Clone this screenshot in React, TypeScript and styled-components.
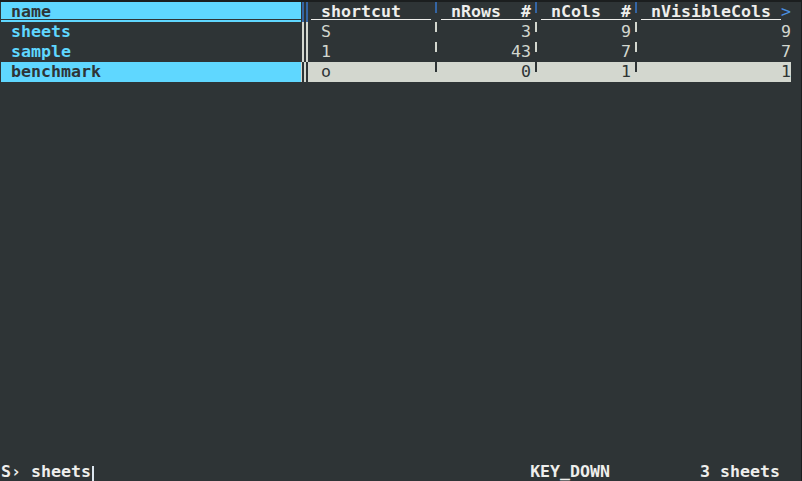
import React from 'react';
import styled, {createGlobalStyle} from 'styled-components';

const colors = {
    bg: '#2e3436',
    edge: '#1b1e1f',
    cyan: '#5fd7ff',
    light: '#d3d7cf',
    white: '#eeeeec',
    dark: '#2e3436',
    blue: '#3465a4',
    arrow: '#4a8fe0',
};

const CELL = 10;

type Column = {
    key: 'shortcut' | 'nRows' | 'nCols' | 'nVisibleCols';
    title: string;
    cells: number;
    numeric: boolean;
    type?: string;
    more?: boolean;
};

const columns: Column[] = [
    {key: 'shortcut', title: 'shortcut', cells: 12, numeric: false},
    {key: 'nRows', title: 'nRows', cells: 9, numeric: true, type: '#'},
    {key: 'nCols', title: 'nCols', cells: 9, numeric: true, type: '#'},
    {key: 'nVisibleCols', title: 'nVisibleCols', cells: 15, numeric: true, more: true},
];

const sheets = [
    {name: 'sheets', shortcut: 'S', nRows: 3, nCols: 9, nVisibleCols: 9},
    {name: 'sample', shortcut: '1', nRows: 43, nCols: 7, nVisibleCols: 7},
    {name: 'benchmark', shortcut: 'o', nRows: 0, nCols: 1, nVisibleCols: 1},
];

const selectedRow = 2;

export default function App() {
    return (
        <>
            <GlobalStyle/>
            <Terminal>
                <Sheet>
                    <Row>
                        <KeyCell $filled $header>
                            <HeaderLabel $color={colors.dark}>name</HeaderLabel>
                        </KeyCell>
                        <KeySep $header/>
                        {columns.map((col, i) => (
                            <React.Fragment key={col.key}>
                                <HeaderCell $cells={col.cells}>
                                    <HeaderLabel $color={colors.white}>
                                        <span>{col.title}</span>
                                        {col.type && <span>{col.type}</span>}
                                    </HeaderLabel>
                                    {col.more && <More>&gt;</More>}
                                </HeaderCell>
                                {i < columns.length - 1 && <ColSep $header/>}
                            </React.Fragment>
                        ))}
                    </Row>

                    {sheets.map((s, r) => {
                        const sel = r === selectedRow;
                        return (
                            <Row key={s.name}>
                                <KeyCell $filled={sel}>{s.name}</KeyCell>
                                <KeySep $selected={sel}/>
                                {columns.map((col, i) => (
                                    <React.Fragment key={col.key}>
                                        <Cell $cells={col.cells} $numeric={col.numeric} $selected={sel}>
                                            {s[col.key]}
                                        </Cell>
                                        {i < columns.length - 1 && <ColSep $selected={sel}/>}
                                    </React.Fragment>
                                ))}
                            </Row>
                        );
                    })}
                </Sheet>

                <StatusBar>
                    <Prompt>
                        S› sheets<Cursor/>
                    </Prompt>
                    <StatusRight>
                        <span>KEY_DOWN</span>
                        <span>3 sheets</span>
                    </StatusRight>
                </StatusBar>
            </Terminal>
        </>
    );
}

const GlobalStyle = createGlobalStyle`
  html, body {
    margin: 0;
    padding: 0;
    background: ${colors.bg};
    overflow: hidden;
  }

  body {
    font-family: "DejaVu Sans Mono", "Liberation Mono", monospace;
    font-size: 16.6px;
    line-height: 20px;
  }
`

const Terminal = styled.div`
  box-sizing: border-box;
  width: 802px;
  height: 482px;
  display: flex;
  flex-direction: column;
  justify-content: space-between;
  padding-left: 1px;
  border-top: 2px solid ${colors.edge};
  border-right: 1px solid ${colors.edge};
  background: ${colors.bg};
  white-space: pre;
`

const Sheet = styled.div`
  display: flex;
  flex-direction: column;
`

const Row = styled.div`
  display: flex;
  height: 20px;
`

const KeyCell = styled.div<{ $filled?: boolean; $header?: boolean }>`
  box-sizing: border-box;
  display: flex;
  width: ${30 * CELL}px;
  padding-left: ${({$header}) => ($header ? 0 : CELL)}px;
  font-weight: bold;
  background: ${({$filled}) => ($filled ? colors.cyan : 'transparent')};
  color: ${({$filled}) => ($filled ? colors.dark : colors.cyan)};
`

const KeySep = styled.div<{ $header?: boolean; $selected?: boolean }>`
  --bar: ${({$header, $selected}) => ($header ? colors.blue : $selected ? colors.dark : colors.light)};
  width: ${CELL}px;
  height: 20px;
  background: linear-gradient(var(--bar), var(--bar)) 1px 0 / 2px 100% no-repeat,
  linear-gradient(var(--bar), var(--bar)) 4.5px 0 / 2px 100% no-repeat,
  ${({$selected}) => ($selected ? colors.light : 'transparent')};
`

const ColSep = styled.div<{ $header?: boolean; $selected?: boolean }>`
  --bar: ${({$header, $selected}) => ($header ? colors.blue : $selected ? colors.dark : colors.light)};
  width: ${CELL}px;
  height: 20px;
  background: linear-gradient(var(--bar), var(--bar)) 4px 0 / 2px ${({$header}) => ($header ? 11 : 10)}px no-repeat,
  ${({$selected}) => ($selected ? colors.light : 'transparent')};
`

const HeaderCell = styled.div<{ $cells: number }>`
  display: flex;
  width: ${({$cells}) => $cells * CELL}px;
`

const HeaderLabel = styled.div<{ $color: string }>`
  flex: 1;
  display: flex;
  justify-content: space-between;
  padding-left: ${CELL}px;
  font-weight: bold;
  color: ${({$color}) => $color};
  background: linear-gradient(${({$color}) => $color}, ${({$color}) => $color}) left bottom 2px / 100% 1px no-repeat;
`

const More = styled.span`
  width: ${CELL}px;
  color: ${colors.arrow};
`

const Cell = styled.div<{ $cells: number; $numeric: boolean; $selected: boolean }>`
  box-sizing: border-box;
  width: ${({$cells}) => $cells * CELL}px;
  padding-left: ${({$numeric}) => ($numeric ? 0 : CELL)}px;
  text-align: ${({$numeric}) => ($numeric ? 'right' : 'left')};
  color: ${({$selected}) => ($selected ? colors.dark : colors.light)};
  background: ${({$selected}) => ($selected ? colors.light : 'transparent')};
`

const StatusBar = styled.div`
  display: flex;
  justify-content: space-between;
  height: 20px;
  padding-right: ${2 * CELL + 1}px;
  font-weight: bold;
  color: ${colors.white};
`

const Prompt = styled.div`
  display: flex;
  align-items: center;
`

const Cursor = styled.span`
  display: inline-block;
  width: 2px;
  height: 16px;
  margin-top: 4px;
  margin-left: 1px;
  background: #dce6ef;
`

const StatusRight = styled.div`
  display: flex;
  gap: ${9 * CELL}px;
`
